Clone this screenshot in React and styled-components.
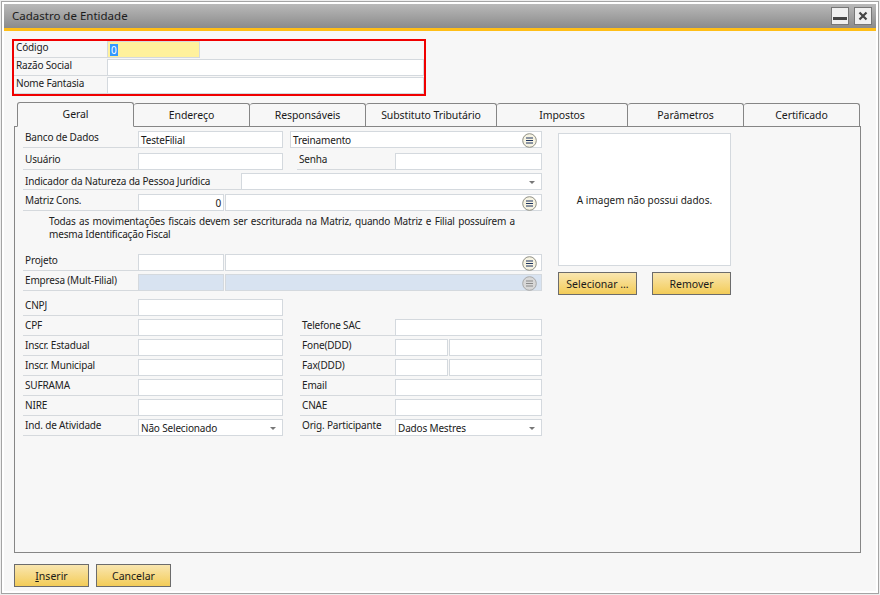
import React from 'react';
import styled, { createGlobalStyle } from 'styled-components';

const Global = createGlobalStyle`
  html, body { margin: 0; padding: 0; background: #f7f7f7; }
  * { box-sizing: border-box; }
  body { font-family: "Noto Sans", "Liberation Sans", sans-serif; font-size: 10px; letter-spacing: -0.17px; color: #222; }
`;

const Frame = styled.div`
  width: 880px;
  height: 595px;
  padding: 1px;
  background: #eee;
`;

const Win = styled.div`
  height: 593px;
  border: 1px solid #a4a4a4;
  padding: 2px;
  background: #fff;
  display: flex;
  flex-direction: column;
`;

const TitleBar = styled.div`
  height: 27px;
  flex: none;
  display: flex;
  align-items: center;
  padding: 0 4px 1px 8px;
  gap: 5px;
  background: linear-gradient(#b9b9b9, #8b8b8b);
  border-bottom: 3px solid #ffbe17;
  font-size: 11.5px;
  letter-spacing: 0;
  color: #1c1c1c;
`;

const Title = styled.div`
  flex: 1;
  padding-bottom: 1px;
`;

const WinBtn = styled.button`
  width: 18px;
  height: 18px;
  padding: 0;
  border: 1px solid #777;
  background: #efefef;
  display: flex;
  align-items: center;
  justify-content: center;
`;

const Body = styled.div`
  flex: 1;
  background: #f7f7f7;
  padding: 8px 0 0 8px;
`;

const Group = styled.div`
  width: 414px;
  height: 57px;
  border: 2px solid #f00000;
`;

const GroupRow = styled.div`
  display: flex;
  height: 17px;
  margin-bottom: 1px;
`;

const GroupLabel = styled.div`
  width: 93px;
  padding: 0 0 0 2px;
  border-bottom: 1px solid #d5d9dd;
  line-height: 13px;
`;

const Input = styled.div`
  width: ${p => p.$w}px;
  height: 17px;
  margin-left: ${p => p.$ml || 0}px;
  border: 1px solid #d4d9de;
  background: ${p => p.$bg || '#fff'};
  padding: 1px 2px 0;
  display: flex;
  align-items: center;
  justify-content: ${p => (p.$right ? 'flex-end' : 'space-between')};
  line-height: 15px;
  color: #1a1a1a;
`;

const Selected = styled.span`
  background: #3399ff;
  color: #fff;
  line-height: 12px;
  padding: 0 1px;
`;

const Tabs = styled.div`
  display: flex;
  align-items: flex-end;
  height: 24px;
  margin: 6px 0 0 5px;
  position: relative;
  z-index: 1;
`;

const Tab = styled.div`
  width: ${p => p.$w}px;
  height: ${p => (p.$active ? 25 : 23)}px;
  margin-bottom: ${p => (p.$active ? -1 : 0)}px;
  padding-bottom: 1px;
  border: 1px solid #868686;
  border-left-width: ${p => (p.$first ? 1 : 0)}px;
  border-bottom: ${p => (p.$active ? '1px solid #f7f7f7' : 'none')};
  border-radius: 3px 3px 0 0;
  background: #f7f7f7;
  font-size: 10.5px;
  letter-spacing: -0.1px;
  display: flex;
  align-items: center;
  justify-content: center;
  color: #1a1a1a;
`;

const Panel = styled.div`
  width: 847px;
  height: 427px;
  margin-left: 2px;
  border: 1px solid #868686;
  padding: 4px 0 0 8px;
  display: flex;
  gap: 16px;
`;

const Form = styled.div`
  width: 519px;
`;

const Row = styled.div`
  display: flex;
  height: 17px;
  margin-top: ${p => p.$mt || 0}px;
`;

const Label = styled.div`
  width: ${p => p.$w}px;
  height: 17px;
  margin-left: ${p => p.$ml || 0}px;
  padding: ${p => p.$pt || 0}px 0 0 2px;
  border-bottom: 1px solid #d5d9dd;
  line-height: 13px;
  white-space: nowrap;
`;

const Note = styled.div`
  height: 43px;
  padding: 4px 0 0 26px;
  width: 492px;
  line-height: 13px;
  text-align: justify;
`;

const ChooseIcon = styled.svg`
  width: 15px;
  height: 15px;
  flex: none;
  margin-right: 2px;
`;

const ImageCol = styled.div`
  width: 173px;
  padding-top: 2px;
`;

const ImageBox = styled.div`
  height: 133px;
  border: 1px solid #d4d9de;
  background: #fff;
  display: flex;
  align-items: center;
  justify-content: center;
  letter-spacing: 0;
  color: #1a1a1a;
`;

const ImageButtons = styled.div`
  display: flex;
  justify-content: space-between;
  margin-top: 6px;
`;

const Btn = styled.button`
  width: ${p => p.$w}px;
  height: 23px;
  padding: 0;
  border: 1px solid #6c6c6c;
  background: linear-gradient(#f9e6b0, #f3cc58);
  font-family: inherit;
  font-size: 10.5px;
  letter-spacing: 0;
  color: #1a1a1a;
`;

const Footer = styled.div`
  display: flex;
  gap: 7px;
  margin: 11px 0 0 2px;
`;

const Arrow = styled.span`
  width: 0;
  height: 0;
  border-left: 3px solid transparent;
  border-right: 3px solid transparent;
  border-top: 3px solid #777;
  margin-right: 4px;
`;

const Choose = ({ off }) => (
  <ChooseIcon viewBox="0 0 15 15">
    <circle cx="7.5" cy="7.5" r="6.8" fill={off ? '#d8d8d8' : '#f6f3e2'} stroke={off ? '#a8a8a8' : '#8f8f85'} />
    <path d="M4 5h7M4 7.5h7M4 10h7" stroke={off ? '#8a8a8a' : '#1f3560'} strokeWidth="1.1" />
  </ChooseIcon>
);

const tabs = [
  ['Geral', 117],
  ['Endereço', 116],
  ['Responsáveis', 116],
  ['Substituto Tributário', 131],
  ['Impostos', 131],
  ['Parâmetros', 116],
  ['Certificado', 116],
];

const pairs = [
  ['CPF', 'Telefone SAC'],
  ['Inscr. Estadual', 'Fone(DDD)', true],
  ['Inscr. Municipal', 'Fax(DDD)', true],
  ['SUFRAMA', 'Email'],
  ['NIRE', 'CNAE'],
];

export default function App() {
  return (
    <Frame>
      <Global />
      <Win>
        <TitleBar>
          <Title>Cadastro de Entidade</Title>
          <WinBtn>
            <svg width="14" height="14" viewBox="0 0 14 14"><rect x="0" y="8" width="14" height="3" fill="#444" /></svg>
          </WinBtn>
          <WinBtn>
            <svg width="10" height="10" viewBox="0 0 10 10"><path d="M1.5 1.5l7 7M8.5 1.5l-7 7" stroke="#444" strokeWidth="2.2" /></svg>
          </WinBtn>
        </TitleBar>
        <Body>
          <Group>
            <GroupRow>
              <GroupLabel>Código</GroupLabel>
              <Input $w={93} $bg="#fff19c"><Selected>0</Selected></Input>
            </GroupRow>
            <GroupRow>
              <GroupLabel>Razão Social</GroupLabel>
              <Input $w={317} />
            </GroupRow>
            <GroupRow>
              <GroupLabel>Nome Fantasia</GroupLabel>
              <Input $w={317} />
            </GroupRow>
          </Group>

          <Tabs>
            {tabs.map(([name, w], i) => (
              <Tab key={name} $w={w} $first={i === 0} $active={i === 0}>{name}</Tab>
            ))}
          </Tabs>
          <Panel>
            <Form>
              <Row>
                <Label $w={115}>Banco de Dados</Label>
                <Input $w={145}>TesteFilial</Input>
                <Input $w={252} $ml={7}>Treinamento<Choose /></Input>
              </Row>
              <Row $mt={5}>
                <Label $w={115}>Usuário</Label>
                <Input $w={145} />
                <Label $w={98} $ml={14}>Senha</Label>
                <Input $w={147} />
              </Row>
              <Row $mt={3}>
                <Label $w={218} $pt={2}>Indicador da Natureza da Pessoa Jurídica</Label>
                <Input $w={301} $right><Arrow /></Input>
              </Row>
              <Row $mt={4}>
                <Label $w={115}>Matriz Cons.</Label>
                <Input $w={86} $right>0</Input>
                <Input $w={317} $ml={1} $right><Choose /></Input>
              </Row>
              <Note>
                Todas as movimentações fiscais devem ser escriturada na Matriz, quando Matriz e Filial possuírem a mesma Identificação Fiscal
              </Note>
              <Row>
                <Label $w={115}>Projeto</Label>
                <Input $w={86} />
                <Input $w={317} $ml={1} $right><Choose /></Input>
              </Row>
              <Row $mt={3}>
                <Label $w={115}>Empresa (Mult-Filial)</Label>
                <Input $w={86} $bg="#d8e3f1" />
                <Input $w={317} $ml={1} $bg="#d8e3f1" $right><Choose off /></Input>
              </Row>
              <Row $mt={8}>
                <Label $w={115}>CNPJ</Label>
                <Input $w={145} />
              </Row>
              {pairs.map(([left, right, split]) => (
                <Row $mt={3} key={left}>
                  <Label $w={115}>{left}</Label>
                  <Input $w={145} />
                  <Label $w={95} $ml={17}>{right}</Label>
                  {split ? (
                    <>
                      <Input $w={53} />
                      <Input $w={93} $ml={1} />
                    </>
                  ) : (
                    <Input $w={147} />
                  )}
                </Row>
              ))}
              <Row $mt={3}>
                <Label $w={115}>Ind. de Atividade</Label>
                <Input $w={145}>Não Selecionado<Arrow /></Input>
                <Label $w={95} $ml={17}>Orig. Participante</Label>
                <Input $w={147}>Dados Mestres<Arrow /></Input>
              </Row>
            </Form>
            <ImageCol>
              <ImageBox>A imagem não possui dados.</ImageBox>
              <ImageButtons>
                <Btn $w={79}>Selecionar ...</Btn>
                <Btn $w={79}>Remover</Btn>
              </ImageButtons>
            </ImageCol>
          </Panel>
          <Footer>
            <Btn $w={75}><u>I</u>nserir</Btn>
            <Btn $w={75}>Cancelar</Btn>
          </Footer>
        </Body>
      </Win>
    </Frame>
  );
}
